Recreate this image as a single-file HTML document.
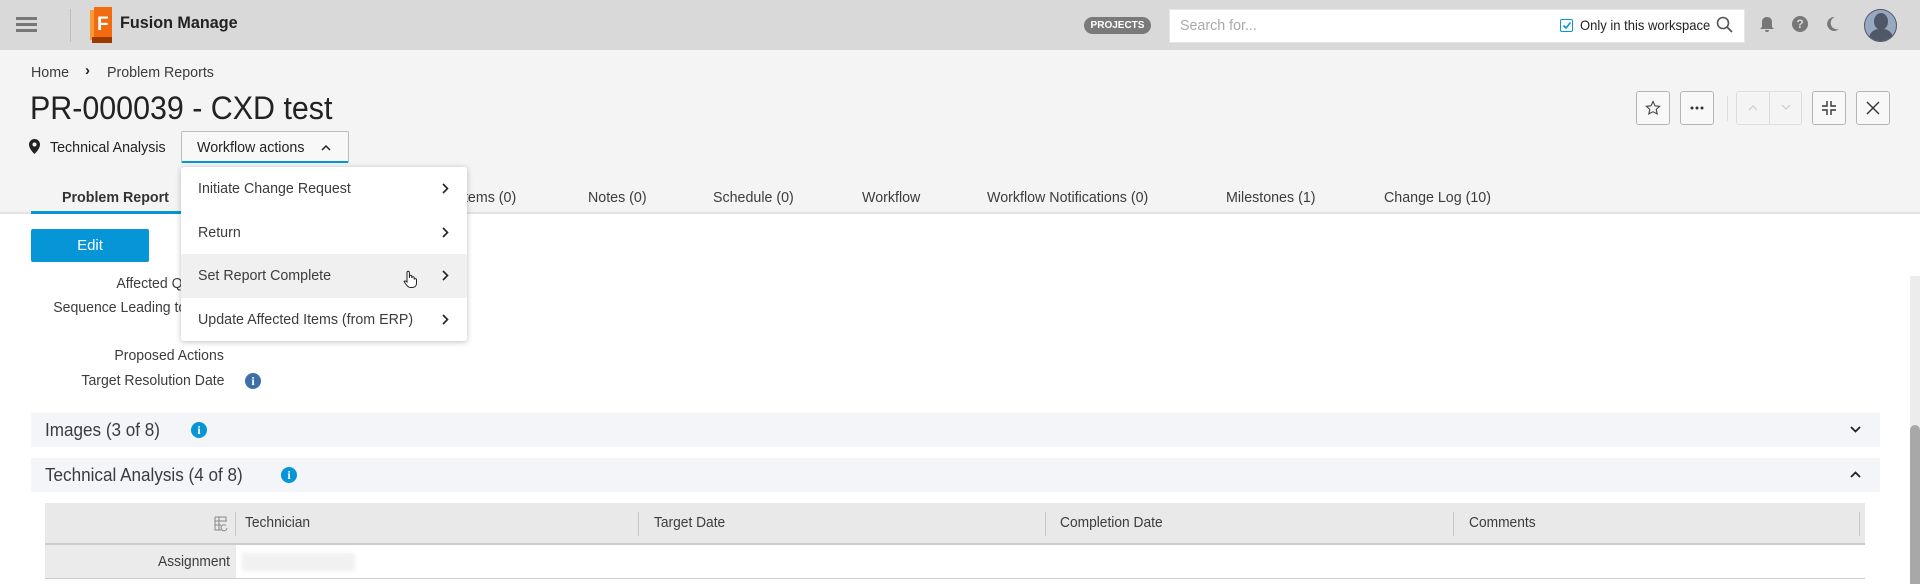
<!DOCTYPE html>
<html><head><meta charset="utf-8"><style>
*{box-sizing:border-box;margin:0;padding:0}
body{width:1920px;height:584px;overflow:hidden;background:#fff;font-family:"Liberation Sans",sans-serif;color:#3c3c3c;position:relative;font-size:15px}
.a{position:absolute;white-space:nowrap}
.n{transform:scaleX(.95);transform-origin:left center}
.hdr{left:0;top:0;width:1920px;height:50px;background:#d9d9d9}
.sub{left:0;top:50px;width:1920px;height:164px;background:#f4f4f4;border-bottom:2px solid #e2e2e2}
.btn{position:absolute;width:34px;height:34px;border:1px solid #b5b5b5;border-radius:3px;background:#f8f8f8;display:flex;align-items:center;justify-content:center}
.tab{position:absolute;top:189px;font-size:15px;color:#3c3c3c;transform:scaleX(.95);transform-origin:left center}
.lbl{position:absolute;right:1696px;font-size:14.5px;color:#3c3c3c;text-align:right;transform:scaleX(.97);transform-origin:right center}
.menu{left:181px;top:167px;width:286px;height:174px;background:#fff;border-radius:3px;box-shadow:0 1px 6px rgba(0,0,0,.25)}
.mi{position:absolute;left:0;width:286px;height:44px;font-size:15px;color:#3c3c3c;padding-left:17px;line-height:44px}
.mi span{display:inline-block;transform:scaleX(.95);transform-origin:left center}
.mi svg{position:absolute;right:18px;top:16px}
.sec{left:31px;width:1849px;height:34px;background:#f4f5f8}
.info{display:inline-block;width:16px;height:16px;border-radius:50%;background:#0696d7;color:#fff;font-size:12px;font-weight:bold;text-align:center;line-height:16px;font-family:"Liberation Serif",serif}
.th{position:absolute;top:515px;font-size:14.5px;color:#3c3c3c;transform:scaleX(.95);transform-origin:left center}
.dv{position:absolute;top:512px;width:1px;height:24px;background:#c8c8c8}
</style></head><body>
<div class="a hdr"></div>
<div class="a" style="left:16px;top:17px;width:21px;height:3px;background:#777"></div>
<div class="a" style="left:16px;top:23px;width:21px;height:3px;background:#777"></div>
<div class="a" style="left:16px;top:29px;width:21px;height:3px;background:#777"></div>
<div class="a" style="left:70px;top:9px;width:1px;height:33px;background:#bdbdbd"></div>
<svg class="a" style="left:89px;top:6px" width="28" height="38" viewBox="0 0 28 38"><path d="M1 4h22v30H1z" fill="#f89a3c"/><path d="M5 1h18v31H5z" fill="#f26b0f"/><path d="M3 31h20v6H3z" fill="#9c3b00"/><text x="8" y="24" font-family="Liberation Sans" font-weight="bold" font-size="19" fill="#fff">F</text></svg>
<div class="a n" style="left:120px;top:13px;font-size:17px;font-weight:bold;color:#222">Fusion Manage</div>
<div class="a" style="left:1084px;top:17px;width:67px;height:17px;border-radius:9px;background:#7a7a7a;color:#fff;font-size:10px;font-weight:bold;text-align:center;line-height:17px">PROJECTS</div>
<div class="a" style="left:1169px;top:9px;width:576px;height:34px;background:#fff;border:1px solid #e6e6e6"></div>
<div class="a n" style="left:1180px;top:17px;font-size:15px;color:#aaa">Search for...</div>
<div class="a" style="left:1560px;top:19px;width:13px;height:13px;border:1.5px solid #0696d7;border-radius:2px"></div>
<svg class="a" style="left:1562px;top:21px" width="10" height="9"><path d="M1.5 4.5l2.5 2.5 4.5-5.5" fill="none" stroke="#0696d7" stroke-width="1.6"/></svg>
<div class="a" style="left:1580px;top:17px;font-size:14px;color:#222;transform:scaleX(.93);transform-origin:left center">Only in this workspace</div>
<svg class="a" style="left:1716px;top:16px" width="18" height="18"><circle cx="7" cy="7" r="5.5" fill="none" stroke="#555" stroke-width="1.6"/><path d="M11 11l5 5" stroke="#555" stroke-width="1.8"/></svg>
<svg class="a" style="left:1760px;top:16px" width="14" height="17"><path d="M7 1c3 0 5 2 5 5v5l2 2H0l2-2V6c0-3 2-5 5-5z M5 14h4a2 2 0 0 1-4 0" fill="#777"/></svg>
<div class="a" style="left:1792px;top:16px;width:16px;height:16px;border-radius:50%;background:#777;color:#d9d9d9;font-size:12px;font-weight:bold;text-align:center;line-height:16px">?</div>
<svg class="a" style="left:1826px;top:16px" width="14" height="16"><path d="M9 1a7 7 0 1 0 4 12A6 6 0 0 1 9 1z" fill="#777"/></svg>
<div class="a" style="left:1864px;top:9px;width:33px;height:33px;border-radius:50%;background:#98a8c0;overflow:hidden;border:1px solid #556"><div class="a" style="left:9px;top:3px;width:14px;height:17px;border-radius:50%;background:#4f5866"></div><div class="a" style="left:4px;top:19px;width:24px;height:20px;border-radius:10px 10px 0 0;background:#4f5866"></div></div>

<div class="a sub"></div>
<div class="a n" style="left:31px;top:64px;font-size:15px;color:#3c3c3c">Home</div>
<div class="a" style="left:85px;top:62px;font-size:15px;color:#222;font-weight:bold">›</div>
<div class="a n" style="left:107px;top:64px;font-size:15px;color:#3c3c3c">Problem Reports</div>
<div class="a n" style="left:30px;top:90px;font-size:32px;color:#222">PR-000039 - CXD test</div>
<svg class="a" style="left:29px;top:139px" width="11" height="15"><path d="M5.5 0a5.5 5.5 0 0 0-5.5 5.5C0 10 5.5 15 5.5 15S11 10 11 5.5A5.5 5.5 0 0 0 5.5 0z" fill="#222"/><circle cx="5.5" cy="5.5" r="2" fill="#f4f4f4"/></svg>
<div class="a n" style="left:50px;top:139px;font-size:15px;color:#222">Technical Analysis</div>
<div class="a" style="left:181px;top:131px;width:168px;height:32px;border:1px solid #bbb;border-bottom:2px solid #0696d7;border-radius:2px;background:#f8f8f8"></div>
<div class="a n" style="left:197px;top:139px;font-size:15px;color:#222">Workflow actions</div>
<svg class="a" style="left:321px;top:144px" width="10" height="7"><path d="M1 6l4-4 4 4" fill="none" stroke="#222" stroke-width="1.5"/></svg>
<div class="btn" style="left:1636px;top:91px"><svg width="16" height="16"><path d="M8 1.5l2 4.3 4.6.5-3.4 3.1 1 4.6L8 11.7 3.8 14l1-4.6L1.4 6.3 6 5.8z" fill="none" stroke="#444" stroke-width="1.1"/></svg></div>
<div class="btn" style="left:1680px;top:91px"><svg width="14" height="4"><circle cx="2" cy="2" r="1.5" fill="#333"/><circle cx="7" cy="2" r="1.5" fill="#333"/><circle cx="12" cy="2" r="1.5" fill="#333"/></svg></div>
<div class="a" style="left:1727px;top:96px;width:1px;height:25px;background:#ddd"></div>
<div class="a" style="left:1736px;top:91px;width:66px;height:34px;border:1px solid #ddd;border-radius:3px"></div>
<div class="a" style="left:1769px;top:91px;width:1px;height:34px;background:#ddd"></div>
<svg class="a" style="left:1748px;top:104px" width="10" height="7"><path d="M1 6l4-4 4 4" fill="none" stroke="#ccc" stroke-width="1.2"/></svg>
<svg class="a" style="left:1781px;top:104px" width="10" height="7"><path d="M1 1l4 4 4-4" fill="none" stroke="#ccc" stroke-width="1.2"/></svg>
<div class="btn" style="left:1812px;top:91px"><svg width="14" height="14"><path d="M5 0v5H0M9 0v5h5M5 14V9H0M9 14V9h5" fill="none" stroke="#333" stroke-width="1.4"/></svg></div>
<div class="btn" style="left:1856px;top:91px"><svg width="14" height="14"><path d="M1 1l12 12M13 1L1 13" stroke="#333" stroke-width="1.4"/></svg></div>

<div class="tab" style="left:62px;font-weight:bold;color:#333">Problem Report</div>
<div class="a" style="left:31px;top:211px;width:151px;height:3px;background:#0696d7"></div>
<div class="tab" style="left:404px">Affected Items (0)</div>
<div class="tab" style="left:588px">Notes (0)</div>
<div class="tab" style="left:713px">Schedule (0)</div>
<div class="tab" style="left:862px">Workflow</div>
<div class="tab" style="left:987px">Workflow Notifications (0)</div>
<div class="tab" style="left:1226px">Milestones (1)</div>
<div class="tab" style="left:1384px">Change Log (10)</div>

<div class="a" style="left:31px;top:229px;width:118px;height:33px;background:#0696d7;border-radius:2px;color:#fff;font-size:15px;text-align:center;line-height:33px">Edit</div>
<div class="lbl" style="top:276px">Affected Quantity</div>
<div class="lbl" style="top:300px">Sequence Leading to Issue</div>
<div class="lbl" style="top:325px">Issue</div>
<div class="lbl" style="top:348px">Proposed Actions</div>
<div class="lbl" style="top:373px">Target Resolution Date</div>
<div class="a info" style="left:245px;top:373px;background:#3f6fa8">i</div>

<div class="a menu">
<div class="mi" style="top:0"><span>Initiate Change Request</span><svg width="7" height="11"><path d="M1 1l4.5 4.5L1 10" fill="none" stroke="#222" stroke-width="1.6"/></svg></div>
<div class="mi" style="top:44px"><span>Return</span><svg width="7" height="11"><path d="M1 1l4.5 4.5L1 10" fill="none" stroke="#222" stroke-width="1.6"/></svg></div>
<div class="mi" style="top:87px;background:#f0f0f0"><span>Set Report Complete</span><svg width="7" height="11"><path d="M1 1l4.5 4.5L1 10" fill="none" stroke="#222" stroke-width="1.6"/></svg></div>
<div class="mi" style="top:131px"><span>Update Affected Items (from ERP)</span><svg width="7" height="11"><path d="M1 1l4.5 4.5L1 10" fill="none" stroke="#222" stroke-width="1.6"/></svg></div>
<svg class="a" style="left:222px;top:103px" width="14" height="18"><path d="M4 9V2.5a1.2 1.2 0 0 1 2.4 0V8V6.5a1.2 1.2 0 0 1 2.4 0V8a1.2 1.2 0 0 1 2.4 0V9.5a1.2 1.2 0 0 1 2.3 0V13c0 3-2 4.5-4.5 4.5H7.5C5 17.5 3.5 15 1 11.5c.8-.8 2-.6 3 .5z" fill="#fff" stroke="#222" stroke-width="1"/></svg>
</div>

<div class="a sec" style="top:413px"></div>
<div class="a n" style="left:45px;top:420px;font-size:18px;color:#3c3c3c">Images (3 of 8)</div>
<div class="a info" style="left:191px;top:422px">i</div>
<svg class="a" style="left:1850px;top:426px" width="11" height="7"><path d="M1 1l4.5 4.5L10 1" fill="none" stroke="#222" stroke-width="1.8"/></svg>
<div class="a sec" style="top:458px"></div>
<div class="a n" style="left:45px;top:465px;font-size:18px;color:#3c3c3c">Technical Analysis (4 of 8)</div>
<div class="a info" style="left:281px;top:467px">i</div>
<svg class="a" style="left:1850px;top:471px" width="11" height="7"><path d="M1 6l4.5-4.5L10 6" fill="none" stroke="#222" stroke-width="1.8"/></svg>

<div class="a" style="left:45px;top:503px;width:1820px;height:42px;background:#e9e9e9;border-bottom:2px solid #ccc"></div>
<svg class="a" style="left:214px;top:516px" width="14" height="16"><path d="M1 1h11v5M1 1v13h6M1 5h11M1 9h6M5 1v13" fill="none" stroke="#888" stroke-width="1"/><path d="M13 12a3 3 0 1 1-1-2.5" fill="none" stroke="#888" stroke-width="1"/></svg>
<div class="dv" style="left:235px"></div>
<div class="th" style="left:245px">Technician</div>
<div class="dv" style="left:638px"></div>
<div class="th" style="left:654px">Target Date</div>
<div class="dv" style="left:1045px"></div>
<div class="th" style="left:1060px">Completion Date</div>
<div class="dv" style="left:1453px"></div>
<div class="th" style="left:1469px">Comments</div>
<div class="dv" style="left:1859px"></div>
<div class="a" style="left:45px;top:545px;width:191px;height:33px;background:#ebebeb"></div>
<div class="a" style="left:45px;top:578px;width:1820px;height:1px;background:#ccc"></div>
<div class="a" style="left:45px;top:554px;width:185px;text-align:right;font-size:14.5px;color:#3c3c3c;transform:scaleX(.95);transform-origin:right center">Assignment</div>
<div class="a" style="left:242px;top:553px;width:113px;height:18px;background:#f1f1f1;filter:blur(2px)"></div>

<div class="a" style="left:1910px;top:276px;width:10px;height:308px;background:#ececec"></div>
<div class="a" style="left:1910px;top:425px;width:10px;height:159px;background:#a8a8a8;border-radius:5px 5px 0 0"></div>
</body></html>
